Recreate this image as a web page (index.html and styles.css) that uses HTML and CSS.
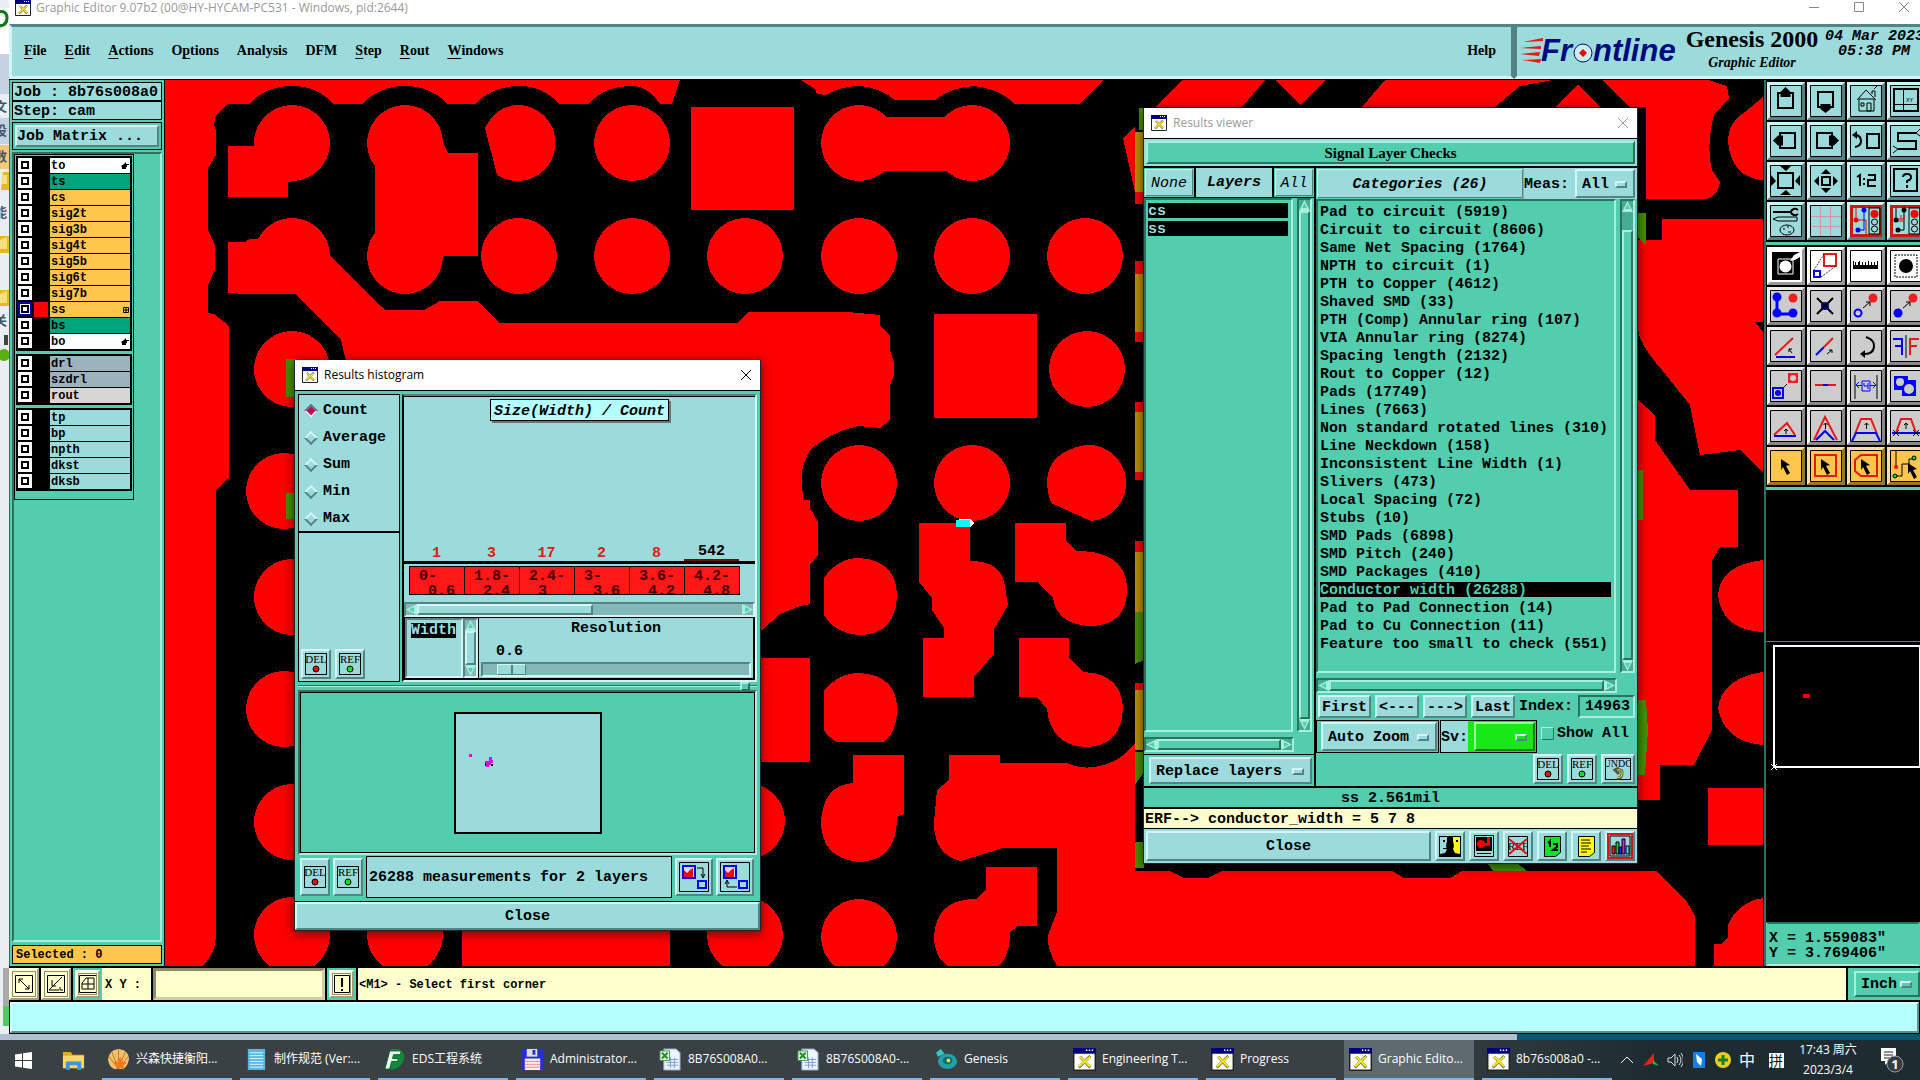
FILE: index.html
```html
<!DOCTYPE html>
<html lang="zh-CN">
<head>
<meta charset="utf-8">
<title>Graphic Editor</title>
<link rel="stylesheet" href="styles.css">
</head>
<body>
<svg class="defs" aria-hidden="true">
  <symbol id="x-app" viewBox="0 0 16 16"><path fill="#fff" stroke="#222" d="M.5.5h15v15H.5z"/><path fill="#000080" d="M0 0h16v4H0z"/><path fill="#fff" d="M9 1h1v1H9zM11 1h1v1h-1zM13 1h1v1h-1z"/><path d="M4 13.500l8-8M5 6l7 7.500" stroke="#555" stroke-width="2"/><path d="M4 13l8-7M5 6l7 7" stroke="#f4e420" stroke-width="1.500"/></symbol>
  <symbol id="x-close" viewBox="0 0 12 12"><path d="M1 1l10 10M11 1L1 11" stroke="currentColor" fill="none"/></symbol>
  <symbol id="i-hand" viewBox="0 0 8 8"><path d="M0 4l3-2 2-2v2h3v1H6v2H5v2H1V5z"/></symbol>
  <symbol id="i-del" viewBox="0 0 24 24"><path d="M1.500 1.500h21v21h-21z" fill="none" stroke="#000"/><text x="12" y="11" text-anchor="middle">DEL</text><circle cx="12" cy="17" r="3" fill="#e01010" stroke="#000"/></symbol>
  <symbol id="i-ref" viewBox="0 0 24 24"><path d="M1.500 1.500h21v21h-21z" fill="none" stroke="#000"/><text x="12" y="11" text-anchor="middle">REF</text><circle cx="12" cy="17" r="3" fill="#10e020" stroke="#000"/></symbol>
  <symbol id="i-xls" viewBox="0 0 24 24"><path d="M5 1h13l4 4v18H5z" fill="#eef4fc" stroke="#8aa4cc"/><path d="M8 12h12M8 15h12M8 18h12M12 10v11M16 10v11" stroke="#7c9cd0"/><path d="M1 3h10v10H1z" fill="#e8f8e8" stroke="#3a9a3a"/><path d="M3 5l6 6M9 5l-6 6" stroke="#228b22" stroke-width="2"/></symbol>
</svg>

<main class="desktop">
  <svg class="behind" viewBox="0 0 9 1040" preserveAspectRatio="xMinYMin slice" aria-hidden="true">
    <path fill="#e9eef3" d="M0 0h9v1040H0z"/><path fill="#fff" d="M0 8h9v46H0z"/><path d="M-2 12q9-2 9 6t-9 8" fill="none" stroke="#0a7a10" stroke-width="3"/><path fill="#c4d2e2" d="M0 54h9v40H0zM0 118h9v26H0z"/><path fill="#f4c878" d="M0 145h9v24H0z"/>
    <path fill="#e8b820" d="M3 172h6v18H1zM0 236h9v17H0zM0 290h9v16H0z"/><path fill="#f8e080" d="M3 175h4v9H2zM0 240l7-3v12H0zM0 294l7-3v12H0z"/><circle cx="4" cy="355" r="6" fill="#58b010"/><path fill="#444" d="M4 335h4v10H4z"/>
    <g fill="#456" font-size="13" font-family="Noto Sans CJK SC"><text x="-6" y="111">文</text><text x="-6" y="135">设</text><text x="-6" y="161">数</text><text x="-6" y="217">能</text><text x="-6" y="325">关</text></g>
    <path fill="#aaa" d="M3 968h6v38H3z"/><path fill="#45d060" d="M3 1006h6v20H3z"/>
  </svg>

  <section class="app">
    <header class="titlebar"><svg class="app-icon"><use href="#x-app"/></svg><h1>Graphic Editor 9.07b2 (00@HY-HYCAM-PC531 - Windows, pid:2644)</h1>
      <div class="win-buttons"><button aria-label="Minimize"><svg viewBox="0 0 12 12"><path d="M1 6.500h10" stroke="#888"/></svg></button><button aria-label="Maximize"><svg viewBox="0 0 12 12"><path d="M1.500 1.500h9v9h-9z" stroke="#888" fill="none"/></svg></button><button aria-label="Close window"><svg><use href="#x-close"/></svg></button></div>
    </header>
    <div class="menu-row">
      <nav class="menubar"><button><u>F</u>ile</button><button><u>E</u>dit</button><button><u>A</u>ctions</button><button>O<u>p</u>tions</button><button>Analysis</button><button>DFM</button><button><u>S</u>tep</button><button><u>R</u>out</button><button><u>W</u>indows</button><button class="help">Help</button></nav>
      <div class="brand">
        <svg class="logo" viewBox="0 0 162 28" aria-label="Frontline"><path fill="#e81818" d="M3 5l20-4v3zM0 11l21-2v3zM0 17l20-2-1 4zM2 23l19-1-1 4z"/><text x="21" y="24">Fr</text><text x="73" y="24">ntline</text><circle cx="63" cy="16" r="9" fill="#cdeef0" stroke="#000a80" stroke-width="1"/><path fill="#e00" d="M63 12l4 4-4 4-4-4z"/></svg>
        <div class="product"><strong>Genesis 2000</strong><em>Graphic Editor</em></div>
        <div class="date"><span>04 Mar 2023</span><span>05:38 PM</span></div>
      </div>
    </div>

    <div class="work">
      <aside class="left">
        <div class="field">Job : 8b76s008a0</div><div class="field">Step: cam</div>
        <div class="matrix"><button class="bevel">Job Matrix ...</button></div>
        <div class="layers"><div class="layer-frame">
          <div class="group">
            <label class="white"><input type="checkbox"><i></i><span>to<svg><use href="#i-hand"/></svg></span></label>
            <label class="teal"><input type="checkbox"><i></i><span>ts</span></label>
            <label class="gold"><input type="checkbox"><i></i><span>cs</span></label>
            <label class="gold"><input type="checkbox"><i></i><span>sig2t</span></label>
            <label class="gold"><input type="checkbox"><i></i><span>sig3b</span></label>
            <label class="gold"><input type="checkbox"><i></i><span>sig4t</span></label>
            <label class="gold"><input type="checkbox"><i></i><span>sig5b</span></label>
            <label class="gold"><input type="checkbox"><i></i><span>sig6t</span></label>
            <label class="gold"><input type="checkbox"><i></i><span>sig7b</span></label>
            <label class="gold"><input type="checkbox" checked><i></i><span>ss<svg viewBox="0 0 8 8"><path class="k1" d="M2.500 1.500h5v5h-5zM5 1v6M2 4h6"/></svg></span></label>
            <label class="teal"><input type="checkbox"><i></i><span>bs</span></label>
            <label class="white"><input type="checkbox"><i></i><span>bo<svg><use href="#i-hand"/></svg></span></label>
          </div>
          <div class="group">
            <label class="slate"><input type="checkbox"><i></i><span>drl</span></label>
            <label class="slate"><input type="checkbox"><i></i><span>szdrl</span></label>
            <label class="gray"><input type="checkbox"><i></i><span>rout</span></label>
          </div>
          <div class="group">
            <label class="aqua"><input type="checkbox"><i></i><span>tp</span></label>
            <label class="aqua"><input type="checkbox"><i></i><span>bp</span></label>
            <label class="aqua"><input type="checkbox"><i></i><span>npth</span></label>
            <label class="aqua"><input type="checkbox"><i></i><span>dkst</span></label>
            <label class="aqua"><input type="checkbox"><i></i><span>dksb</span></label>
          </div>
        </div></div>
        <div class="selected">Selected : 0</div>
      </aside>

      <svg class="board" viewBox="165 80 1598 886" preserveAspectRatio="xMinYMin slice" aria-label="Circuit board artwork">
        <path fill="#000" d="M165 80h1598v886H165z"/>
        <g fill="#f00">
          <path d="M165 80H680L672 104H660Q648 86 632 86Q604 86 589 104H559Q544 86 519 86Q493 86 475 104H448Q430 86 405 86Q380 86 362 104H333Q318 86 292 86Q266 86 249 104H227L216 115L214 125L216 130V155L208 168V230L215 245V270L208 285V313L214 314L229 326V478L216 490V935Q216 952 203 966H165z"/>
          <path d="M801 80L815 89L817 94L826 95Q840 86 861 86Q880 88 895 100H935Q950 88 973 86Q998 88 1015 104H1080L1103 80z"/>
          <path d="M228 146H292V182H288V197H228zM375 143H443L448 153H478V256H375zM691 107h103v103H691zM859 117h113v54H859z"/>
          <path d="M228 242H245L250 239H292L330 256L378 304L386 310H424L440 301H477L499 323H738L748 312L847 312L880 315V325L890 336V350L894 362V375L890 385V420L880 428L859 426Q830 432 810 450Q800 468 802 482L803 500H810V508L818 522V555L810 565V604L800 606L780 614L762 630H500V370H348L341 340L295 294H245L228 293z"/>
          <path d="M519 105a38 38 0 1 1-22 70L485 128Q497 105 519 105z"/>
          <circle cx="292" cy="143" r="38"/><circle cx="405" cy="143" r="38"/><circle cx="632" cy="143" r="38"/><circle cx="859" cy="143" r="38"/><circle cx="972" cy="143" r="38"/>
          <circle cx="292" cy="256" r="38"/><circle cx="405" cy="256" r="38"/><circle cx="519" cy="256" r="38"/><circle cx="632" cy="256" r="38"/><circle cx="745" cy="256" r="38"/><circle cx="859" cy="256" r="38"/><circle cx="972" cy="256" r="38"/><circle cx="1085" cy="256" r="38"/>
          <circle cx="292" cy="369" r="38"/><circle cx="1087" cy="369" r="38"/><circle cx="284" cy="491" r="38"/><circle cx="859" cy="483" r="38"/><circle cx="972" cy="483" r="38"/>
          <path d="M1085 445a38 38 0 0 1 6 76L1051 503Q1035 455 1085 445z"/>
          <path d="M934 314h103v104H934zM919 523h51v38q29 0 34 20l4 24-14 24v25l-20 23v20H923v-59h21v-10l-12-18v-12l-12-15h-1z"/>
          <path d="M1015 523h51v18l11 10q50 0 50 39 0 36-38 36-32-2-36-28l-16-16h-22z"/>
          <path d="M1019 638h50v20l15 14q38 2 39 37-2 38-38 38-34-2-38-38l-10-12h-18z"/>
          <path d="M824 578q14-20 35-20 38 2 38 39-2 38-38 38-24-2-35-20zM824 691q14-18 35-18 38 2 38 36 0 24-14 33h-46q-8-4-13-12z"/>
          <path d="M700 658h110v104H700zM853 755h51v59l-7 3q0 44-38 45-38-4-38-40 2-37 32-39z"/>
          <circle cx="747" cy="821" r="38"/><circle cx="745" cy="935" r="38"/><circle cx="859" cy="937" r="38"/>
          <path d="M949 755h51v8h67q18 8 36 2 18-4 32-22v128h35l14 7h24l14-7h170l12 7h46l12-7h195l30 31 8 14v50H1057q-10-16-9-31l9-23v-64h-54l-42 13q-27-6-27-38l3-33 12-10z"/>
          <path d="M986 867h51v59h-19l-8 6q0 44-38 42-38-4-38-38 2-37 42-37l10-10z"/>
          <circle cx="178" cy="935" r="38"/><circle cx="292" cy="935" r="38"/><circle cx="405" cy="935" r="38"/><path d="M462 900h208v66H462z"/>
          <circle cx="292" cy="597" r="38"/><circle cx="284" cy="709" r="38"/><circle cx="292" cy="822" r="38"/>
          <path d="M1156 107L1182 80H1265L1242 107zM1275 80H1325L1301 105zM1362 107L1385 80H1553L1520 86L1495 107zM1555 107L1578 85L1600 107z"/>
          <path d="M1602 80H1708L1727 86L1729 98L1714 115Q1706 145 1712 170L1720 182Q1718 196 1706 199H1646V107H1629z"/>
          <path d="M1763 97L1745 112Q1728 122 1728 142Q1732 178 1763 180z"/>
          <path d="M1662 219H1763V322H1755L1763 332V473L1740 450L1700 455L1690 405L1662 370Q1640 345 1638 330V240H1662z"/>
          <path d="M1638 400L1655 415V440L1690 490H1738V547H1720L1712 560V730L1694 765H1638zM1646 763H1660V800H1638V762z"/>
          <path d="M1763 560Q1720 565 1718 595Q1722 630 1763 632zM1763 672Q1722 678 1718 708Q1724 742 1763 745zM1708 788H1763V845H1708z"/>
          <path d="M1714 966V944H1722L1728 937V925Q1738 902 1763 898V966z"/>
          <path d="M1123 138L1135 127V204H1144V192H1135zM1135 261h9v81h-9zM1135 402h9v78h-9zM1135 541h9v20h-9zM1135 683h9v10h-9z"/>
        </g>
        <path fill="#489200" d="M286 359h10v38h-10zM286 493h10v26h-10zM1139 108h5v22h-5zM1135 612h9v48l-9 4zM1135 752h9v20l-9 13zM1135 842h9v26h-9zM1487 863h30l10 8h-34zM1637 213h9v32l-9-8zM1637 700h9l2 30-3 45h-8zM1637 470h6v50h-6z"/>
        <path fill="#bd9200" d="M1135 132h9v60h-9zM1135 274h9v58h-9zM1135 412h9v60h-9zM1135 552h9v60h-9zM1135 690h9v60h-9z"/>
        <path fill="#fff" d="M955 523l4-4h12l3 4-3 4h-12z"/><path fill="#0ff" d="M956 520h14v7h-14z"/>
      </svg>

      <aside class="right">
        <div class="tools aqua-tools">
          <button aria-label="Pan up"><svg viewBox="0 0 32 32"><path class="fr"/><path class="k2" d="M8 8h15v15H8z"/><path d="M15.500 2l5 5v5h-10V7z"/></svg></button>
          <button aria-label="Pan down"><svg viewBox="0 0 32 32"><path class="fr"/><path class="k2" d="M8 7h15v15H8z"/><path d="M15.500 28l5-4v-5h-10v5z"/></svg></button>
          <button aria-label="Home"><svg viewBox="0 0 32 32"><path class="fr"/><path class="k1" d="M9 14h15v12H9zM7 15L16 5l10 10M22 9V6h3v6M17 18h4v8h-4zM11 18h3v3h-3zM24 4l3-3"/></svg></button>
          <button aria-label="Coordinates"><svg viewBox="0 0 32 32"><path class="fr"/><path class="k2" d="M4 4h24v22H4z"/><path class="k1" d="M13.500 3v24M3 19.500h25"/><text x="16" y="17" font-size="6">XY</text></svg></button>
          <button aria-label="Pan left"><svg viewBox="0 0 32 32"><path class="fr"/><path class="k2" d="M10 8h15v15H10z"/><path d="M3 15.500l5-5h5v10H8z"/></svg></button>
          <button aria-label="Pan right"><svg viewBox="0 0 32 32"><path class="fr"/><path class="k2" d="M7 8h15v15H7z"/><path d="M29 15.500l-5-5h-5v10h5z"/></svg></button>
          <button aria-label="Previous view"><svg viewBox="0 0 32 32"><path class="fr"/><path class="k2" d="M17 9h12v14H17zM5 22q6-1 6-6t-5-6"/><path d="M2 10l5-4v8z"/></svg></button>
          <button aria-label="Serpentine"><svg viewBox="0 0 32 32"><path class="fr"/><path class="k2" d="M26 8H8v8h18v8H8"/><path class="k1" d="M26 8l4-4M8 24l-5 4M26 8l4 3M8 24l-5-3"/></svg></button>
          <button aria-label="Zoom in"><svg viewBox="0 0 32 32"><path class="fr"/><path class="k2" d="M8 8h15v15H8z"/><path d="M10 1h11l-5 5zM10 30h11l-5-5zM1 10v11l5-5zM30 10v11l-5-5z"/></svg></button>
          <button aria-label="Zoom out"><svg viewBox="0 0 32 32"><path class="fr"/><path class="k2" d="M12 12h8v8h-8z"/><path d="M11 9h10l-5-5zM11 23h10l-5 5zM9 11v10l-5-5zM23 11v10l5-5z"/></svg></button>
          <button aria-label="Scale one to two"><svg viewBox="0 0 32 32"><path class="fr"/><path class="k2" d="M7 12l3-2v11M14 13v2M14 18v2M18 10h7v5h-7v6h8"/></svg></button>
          <button aria-label="Query"><svg viewBox="0 0 32 32"><path class="fr"/><path class="k2" d="M4 4h23v22H4zM13 12q0-3 4-3t4 3-4 4v2M17 20v3"/></svg></button>
          <button aria-label="Setup"><svg viewBox="0 0 32 32"><path class="fr"/><path class="k2" d="M3 7h17"/><path class="k2" d="M28 5a4 3 0 1 0 0 4"/><path class="k1" d="M3 14l5-2h19v4H8z"/><ellipse class="k1" cx="17" cy="25" rx="7" ry="5"/><path class="k1" d="M13 24h2M17 22h2M18 27h3"/></svg></button>
          <button aria-label="Grid"><svg viewBox="0 0 32 32"><path class="fr"/><path d="M10.500 1v30M20.500 1v30M1 11.500h30M1 21.500h30" stroke="#c99" fill="none"/></svg></button>
          <button aria-label="Net check" class="alert"><svg viewBox="0 0 32 32"><path d="M6 3v12h10v15" stroke="#e00" fill="none"/><path d="M14 5v20H8" stroke="#00f" fill="none"/><circle cx="6" cy="15" r="2.500" fill="#e00"/><circle cx="14" cy="5" r="2.500" fill="#00f"/><circle cx="8" cy="25" r="2.500" fill="#00f"/><path class="k1" d="M19 3h11v26H19z"/><circle cx="24.500" cy="9" r="4" fill="#f00"/><circle class="k1" cx="24.500" cy="17" r="3"/><circle class="k1" cx="24.500" cy="24" r="3"/></svg></button>
          <button aria-label="Net compare" class="alert"><svg viewBox="0 0 32 32"><path d="M6 3v12M14 5v20H8" stroke="#000" fill="none"/><path d="M8 14h6v-4M11 10v4M8 16h6" stroke="#e00" fill="none"/><circle cx="6" cy="15" r="2.500"/><circle cx="14" cy="5" r="2.500"/><circle cx="8" cy="25" r="2.500"/><path class="k1" d="M19 3h11v26H19z"/><circle cx="24.500" cy="9" r="4" fill="#f00"/><circle class="k1" cx="24.500" cy="17" r="3"/><circle class="k1" cx="24.500" cy="24" r="3"/></svg></button>
        </div>
        <div class="tools gray-tools">
          <button class="lit" aria-label="Negative"><svg viewBox="0 0 32 32"><path d="M2 2h28v28H2z"/><path d="M8 9h15v15H8z" fill="#000" stroke="#fff"/><circle cx="15.500" cy="16.500" r="6" fill="#fff"/><path d="M20 11l4-6 6-3v5l-5 3z" fill="#fff"/></svg></button>
          <button class="lit" aria-label="Control"><svg viewBox="0 0 32 32"><path class="fr"/><path class="r2" d="M14 4h12v12H14z"/><path class="b2" d="M4 21h6v6H4z"/><path class="k1" stroke-dasharray="1 1" d="M4 20L14 4M11 27l15-11"/></svg></button>
          <button class="lit" aria-label="Ruler"><svg viewBox="0 0 32 32"><path class="fr"/><path d="M3 11v8h25v-8h-1v4h-2v-3h-1v3h-2v-3h-1v3h-2v-4h-1v4h-2v-3h-1v3h-2v-3h-1v3h-2v-4h-1v4H9v-3H8v3H6v-3H5v3H4v-4z"/></svg></button>
          <button class="lit" aria-label="Highlight"><svg viewBox="0 0 32 32"><path class="fr"/><path class="k1" stroke-dasharray="2 1" d="M5 5h22v22H5z"/><circle cx="16" cy="16" r="7"/></svg></button>
          <button aria-label="Connected"><svg viewBox="0 0 32 32"><path class="fr"/><path d="M7 7v17h17" stroke="#00f" stroke-width="3" fill="none"/><g fill="#00f"><circle cx="7" cy="7" r="4.500"/><circle cx="7" cy="23" r="4.500"/><circle cx="23" cy="23" r="4.500"/></g><circle cx="23" cy="8" r="4.500" fill="#f02020"/></svg></button>
          <button aria-label="Delete"><svg viewBox="0 0 32 32"><path class="fr"/><circle cx="15" cy="16" r="4" fill="#00a"/><path class="k2" d="M7 8l16 16M23 8L7 24"/></svg></button>
          <button aria-label="Move"><svg viewBox="0 0 32 32"><path class="fr"/><circle class="b2" cx="8" cy="23" r="3.500"/><circle cx="23" cy="8" r="4.500" fill="#f02020"/><path class="k1" d="M13 18l7-6m-4 0h4v4"/></svg></button>
          <button aria-label="Copy"><svg viewBox="0 0 32 32"><path class="fr"/><circle cx="8" cy="23" r="4.500" fill="#00f"/><circle cx="23" cy="8" r="4.500" fill="#f02020"/><path class="k1" d="M13 18l7-6m-4 0h4v4"/></svg></button>
          <button aria-label="Angle"><svg viewBox="0 0 32 32"><path class="fr"/><path class="r2" d="M5 25L23 8"/><path class="b2" d="M6 27h19"/><path class="k1" d="M22 23l-3-4m0 3v-3h3"/></svg></button>
          <button aria-label="Line"><svg viewBox="0 0 32 32"><path class="fr"/><path class="b2" d="M6 25l8-8"/><path class="r2" d="M14 17l9-9"/><path class="k1" d="M17 24l5-4m-3 0h3v3"/></svg></button>
          <button aria-label="Rotate"><svg viewBox="0 0 32 32"><path class="fr"/><path class="k2" d="M16 7q9 3 8 10t-9 7h-4"/><path d="M10 24l5-4v8z"/></svg></button>
          <button aria-label="Mirror"><svg viewBox="0 0 32 32"><path class="fr"/><path class="b2" d="M3 9h9v16M12 16H5"/><path class="r2" d="M29 9h-9v16M20 16h7"/><path class="k1" d="M16 5v23"/></svg></button>
          <button aria-label="Change symbol"><svg viewBox="0 0 32 32"><path class="fr"/><path fill="#f02020" d="M18 3h10v10H18z"/><circle cx="23" cy="8" r="3" fill="#ccc"/><path class="b2" d="M3 18h10v10H3z"/><circle cx="8" cy="23" r="3" fill="#00f"/><path class="k1" d="M14 17l3-3"/></svg></button>
          <button aria-label="Trim"><svg viewBox="0 0 32 32"><path class="fr"/><path class="r2" d="M5 15h21"/><path class="b2" d="M13 15h5"/></svg></button>
          <button aria-label="Spacing"><svg viewBox="0 0 32 32"><path class="fr"/><path class="k1" d="M5 5v24M27 5v24"/><path d="M6 15.500h6M20 15.500h6M9 12l-3 3 3 3M23 12l3 3-3 3M12 11h8v10h-8zM14 13v3h4M18 13v6" fill="none" stroke="#00f"/></svg></button>
          <button aria-label="Merge"><svg viewBox="0 0 32 32"><path class="fr"/><path fill="#00f" d="M4 6h14v4h8v16H12v-6H4z"/><circle cx="10" cy="12" r="4" fill="#ccc"/><circle cx="19" cy="19" r="5" fill="#ccc"/></svg></button>
          <button aria-label="Triangle"><svg viewBox="0 0 32 32"><path class="fr"/><path class="r2" d="M4 25l13-12 8 12"/><path class="b2" d="M4 26h22"/><path class="k1" d="M16 24v-5m-2 2l2-2 2 2"/></svg></button>
          <button aria-label="Peak"><svg viewBox="0 0 32 32"><path class="fr"/><path class="r2" d="M4 30L15 7l12 23"/><path class="b2" d="M6 30l9-9 9 9"/><path class="k1" d="M15.500 19v-6m-2 2l2-2 2 2"/></svg></button>
          <button aria-label="Trapezoid"><svg viewBox="0 0 32 32"><path class="fr"/><path class="r2" d="M5 24l6-15h10l6 15"/><path class="b2" d="M2 31l4-8h20l4 8"/><path class="k1" d="M16.500 19v-6m-2 2l2-2 2 2"/></svg></button>
          <button aria-label="Trapezoid cut"><svg viewBox="0 0 32 32"><path class="fr"/><path class="r2" d="M6 23l5-14h10l5 14"/><path class="b2" d="M2 23h28"/><path class="k1" d="M3 20l6 6M9 20l-6 6M23 20l6 6M29 20l-6 6M16 19v-6m-2 2l2-2 2 2"/></svg></button>
          <button class="orange" aria-label="Select"><svg viewBox="0 0 32 32"><path class="fr"/><path d="M11 9l9 6-4 1 4 7-3 2-4-8-2 3z"/></svg></button>
          <button class="orange" aria-label="Select in frame"><svg viewBox="0 0 32 32"><path class="fr"/><path class="r2" d="M5 5h21v21H5z"/><path d="M11 9l9 6-4 1 4 7-3 2-4-8-2 3z"/></svg></button>
          <button class="orange" aria-label="Select in polygon"><svg viewBox="0 0 32 32"><path class="fr"/><path class="r2" d="M11 5h16v21H11l-6-5V10z"/><path d="M11 9l9 6-4 1 4 7-3 2-4-8-2 3z"/></svg></button>
          <button class="orange" aria-label="Select net"><svg viewBox="0 0 32 32"><path class="fr"/><path class="k1" d="M6 1v16M5 26h7V14h7V9h6"/><circle cx="6" cy="17" r="2" fill="#e00"/><circle cx="5" cy="26" r="2" fill="#1d1" stroke="#000"/><circle cx="24" cy="8" r="2" fill="#1d1" stroke="#000"/><path d="M18 13l9 6-4 1 4 7-3 2-4-8-2 3z"/></svg></button>
        </div>
        <div class="overview"><svg viewBox="0 0 155 434" aria-label="Board overview"><path d="M0 151.500h155" stroke="#678"/><path d="M8 156h146v121H8z" fill="none" stroke="#fff" stroke-width="2"/><path fill="#f00" d="M37 204h7v4h-7z"/><path d="M5 274l6 6M11 274l-6 6" stroke="#fff"/></svg></div>
        <div class="position">X = 1.559083"<br>Y = 3.769406"</div>
      </aside>
    </div>

    <div class="entry-row">
      <button class="cream" aria-label="Resize"><svg viewBox="0 0 20 20"><path class="k1" d="M1.500 1.500h17v17h-17zM5 5l10 10M5 9V5h4M15 11v4h-4"/></svg></button>
      <button class="cream" aria-label="Angle snap"><svg viewBox="0 0 20 20"><path class="k1" d="M1.500 1.500h17v17h-17zM3 16L16 3M3 16h10M6 6v6h4M14 13v3h3"/></svg></button>
      <span class="well"><button class="cream" aria-label="Grid snap"><svg viewBox="0 0 20 20"><path class="k1" d="M1.500 1.500h17v17h-17zM4 15V9l4-5h8v11zM4 10h12M10 4v11"/></svg></button></span>
      <label for="xy">X Y :</label><input id="xy" class="cream-input" type="text">
      <span class="well"><button class="cream" aria-label="Apply"><svg viewBox="0 0 20 20"><path class="k1" d="M2.500 1.500h15v17h-15z"/><path class="k2" d="M10 4v9M10 15v2"/></svg></button></span>
      <output>&lt;M1&gt; - Select first corner</output>
      <span class="unit"><span class="option green"><select aria-label="Units"><option>Inch</option></select></span></span>
    </div>
    <div class="status"></div>
  </section>

  <section class="dialog histogram">
    <header class="dialog-title"><svg class="app-icon"><use href="#x-app"/></svg><h2>Results histogram</h2><button aria-label="Close histogram window"><svg><use href="#x-close"/></svg></button></header>
    <div class="hist-body">
      <div class="hist-top">
        <div class="hist-side">
          <fieldset aria-label="Statistic"><label><input type="radio" name="stat" checked>Count</label><label><input type="radio" name="stat">Average</label><label><input type="radio" name="stat">Sum</label><label><input type="radio" name="stat">Min</label><label><input type="radio" name="stat">Max</label></fieldset>
          <div class="side-buttons"><button class="bevel sq" aria-label="Delete"><svg><use href="#i-del"/></svg></button><button class="bevel sq" aria-label="Refresh"><svg><use href="#i-ref"/></svg></button></div>
        </div>
        <div class="hist-main">
          <div class="chart"><div class="chart-title">Size(Width) / Count</div>
            <div class="counts"><span>1</span><span>3</span><span>17</span><span>2</span><span>8</span><span class="high">542</span></div>
          </div>
          <div class="bins"><span>0-<i>0.6</i></span><span>1.8-<i>2.4</i></span><span>2.4-<i>3</i></span><span>3-<i>3.6</i></span><span>3.6-<i>4.2</i></span><span>4.2-<i>4.8</i></span></div>
          <div class="hscroll aq"><b class="l"></b><span><i style="width:54%"></i></span><b class="r"></b></div>
          <div class="hist-controls"><div class="width-list"><mark>Width</mark></div><div class="vscroll aq"><b class="u"></b><span><i></i></span><b class="d"></b></div>
            <div class="resolution"><label for="res">Resolution</label><output>0.6</output><input id="res" type="range" min="0" max="10" step="0.1" value="0.600"></div></div>
        </div>
      </div>
      <div class="sash"><i></i></div>
      <div class="map"><svg viewBox="0 0 148 122" aria-label="Result locations"><path fill="#9cdbdb" stroke="#000" stroke-width="2" d="M1 1h146v120H1z"/><path fill="#c818e0" d="M15 42h3v3h-3zM35 45h3v3h1v3h-2v2h-2v2h-3v-3h-1v-3h4z"/><path d="M31 51h1v3h-1zM37 52h2v2h-2z"/></svg></div>
      <div class="hist-foot"><button class="bevel tall" aria-label="Delete"><svg><use href="#i-del"/></svg></button><button class="bevel tall" aria-label="Refresh"><svg><use href="#i-ref"/></svg></button><div class="summary">26288 measurements for 2 layers</div>
        <button class="bevel chart-btn" aria-label="Chart to list"><svg viewBox="0 0 30 30"><path class="k1" d="M.500.500h29v29H.500z"/><path fill="#d8d8ff" stroke="#00e" stroke-width="2" d="M4 4h12v12H4z"/><path fill="#e01010" d="M5 15V8l3 3 3-3 3-2v9z"/><path class="b2" d="M19 19h8v7h-8z"/><path class="k1" d="M18 6h6v9m-2-3l2 4 2-4"/></svg></button><button class="bevel chart-btn" aria-label="List to chart"><svg viewBox="0 0 30 30"><path class="k1" d="M.500.500h29v29H.500z"/><path fill="#d8d8ff" stroke="#00e" stroke-width="2" d="M4 4h12v12H4z"/><path fill="#e01010" d="M5 15V8l3 3 3-3 3-2v9z"/><path class="b2" d="M19 19h8v7h-8z"/><path class="k1" d="M17 25H7v-6m-2 3l2-4 2 4"/></svg></button></div>
    </div>
    <button class="bevel close-bar">Close</button>
  </section>

  <section class="dialog viewer">
    <header class="dialog-title inactive"><svg class="app-icon"><use href="#x-app"/></svg><h2>Results viewer</h2><button aria-label="Close viewer window"><svg><use href="#x-close"/></svg></button></header>
    <div class="checks"><button class="bevel-g">Signal Layer Checks</button></div>
    <div class="columns">
      <div class="layers-col">
        <div class="layers-head"><button class="bevel it">None</button><h3>Layers</h3><button class="bevel it">All</button></div>
        <div class="list-area"><ul class="list dark"><li class="sel">cs</li><li class="sel">ss</li></ul><div class="vscroll"><b class="u"></b><span><i></i></span><b class="d"></b></div></div>
        <div class="hscroll short"><b class="l"></b><span><i style="width:100%"></i></span><b class="r"></b></div>
        <div class="replace"><span class="option"><select aria-label="Layer action"><option>Replace layers</option></select></span></div>
      </div>
      <div class="cat-col">
        <div class="cat-head"><button class="bevel it-b">Categories (26)</button><label for="meas">Meas:</label><span class="option"><select id="meas"><option>All</option></select></span></div>
        <div class="list-area"><ul class="list"><li>Pad to circuit (5919)</li><li>Circuit to circuit (8606)</li><li>Same Net Spacing (1764)</li><li>NPTH to circuit (1)</li><li>PTH to Copper (4612)</li><li>Shaved SMD (33)</li><li>PTH (Comp) Annular ring (107)</li><li>VIA Annular ring (8274)</li><li>Spacing length (2132)</li><li>Rout to Copper (12)</li><li>Pads (17749)</li><li>Lines (7663)</li><li>Non standard rotated lines (310)</li><li>Line Neckdown (158)</li><li>Inconsistent Line Width (1)</li><li>Slivers (473)</li><li>Local Spacing (72)</li><li>Stubs (10)</li><li>SMD Pads (6898)</li><li>SMD Pitch (240)</li><li>SMD Packages (410)</li><li class="sel">Conductor width (26288)</li><li>Pad to Pad Connection (14)</li><li>Pad to Cu Connection (11)</li><li>Feature too small to check (551)</li></ul><div class="vscroll lower"><b class="u"></b><span><i></i></span><b class="d"></b></div></div>
        <div class="hscroll short"><b class="l"></b><span><i style="width:100%"></i></span><b class="r"></b></div>
        <div class="nav-row"><button class="bevel">First</button><button class="bevel">&lt;---</button><button class="bevel">---&gt;</button><button class="bevel">Last</button><label for="idx">Index:</label><input id="idx" type="text" value="14963"></div>
        <div class="zoom-row"><span class="boxed"><span class="option"><select aria-label="Zoom mode"><option>Auto Zoom</option></select></span></span><span class="boxed sv"><label for="sv">Sv:</label><span class="option lime"><select id="sv"><option></option></select></span></span><label class="show"><input type="checkbox">Show All</label></div>
        <div class="action-row"><button class="bevel sq" aria-label="Delete"><svg><use href="#i-del"/></svg></button><button class="bevel sq" aria-label="Refresh"><svg><use href="#i-ref"/></svg></button><button class="bevel undo" aria-label="Undo"><svg viewBox="0 0 26 24"><path d="M.500 1.500h25v21H.500z" fill="none" stroke="#000"/><text x="13" y="10" text-anchor="middle">UNDO</text><path d="M12 13q6-1 5 4t-5 4M14 11l-4 2 4 4" fill="none" stroke="#554" stroke-width="3"/><path d="M12 13q6-1 5 4t-5 3" fill="none" stroke="#ee2"/></svg></button></div>
      </div>
    </div>
    <div class="measure">ss 2.561mil</div>
    <div class="erf">ERF--&gt; conductor_width = 5 7 8</div>
    <div class="view-foot"><button class="bevel">Close</button>
      <button class="bevel sq" aria-label="Day or night"><svg viewBox="0 0 24 24"><path d="M1 2h22v21H1z"/><path fill="#9cdbdb" d="M2 3h7v4l-1 5 1 3-2 4-5 1z"/><path fill="#ff0" d="M15 3h7v17l-5-1-2-4 1-3-1-5z"/><path d="M5 6h2v2H5zM18 6h2v2h-2zM5 14h4v1H5z"/></svg></button>
      <button class="bevel sq" aria-label="Record"><svg viewBox="0 0 24 24"><path class="k1" d="M2.500 1.500h19v21h-19z"/><path d="M4 3h16v14H4z"/><circle cx="9" cy="10" r="4" fill="#e00"/><path fill="#e00" d="M15 3h3v9h-6v-3h3z"/><path class="k1" d="M5 19.500h14"/></svg></button>
      <button class="bevel sq" aria-label="No reference"><svg viewBox="0 0 24 24"><path class="k1" d="M2.500 2.500h19v20h-19z"/><text x="12" y="16" text-anchor="middle">REF</text><path d="M3 5l18 15M21 5L3 20" stroke="#e01010" stroke-width="2"/></svg></button>
      <button class="bevel sq" aria-label="Half"><svg viewBox="0 0 24 24"><path fill="#10e030" stroke="#000" d="M4.500 2.500h16v16l-5 4h-11z"/><path class="k2" d="M8 9l2-2v6M13 10h4v3l-4 3h5"/></svg></button>
      <button class="bevel sq" aria-label="Notes"><svg viewBox="0 0 24 24"><path fill="#ff0" stroke="#000" d="M4.500 2.500h16v16l-5 4h-11z"/><path class="k1" d="M7 6h9M7 9h10M7 12h8M7 15h10M7 18h6"/></svg></button>
      <button class="bevel sq red" aria-label="Histogram"><svg viewBox="0 0 24 24"><path class="k1" d="M2 2h20v20H2z"/><path fill="#e22" stroke="#000" d="M4 12h3v8H4z"/><path fill="#1c4" stroke="#000" d="M8 8h3v12H8z"/><path fill="#22e" stroke="#000" d="M11 13h3v7h-3z"/><path fill="#c2e" stroke="#000" d="M14 5h3v15h-3z"/><path fill="#2ef" stroke="#000" d="M18 12h3v8h-3z"/></svg></button>
    </div>
  </section>
</main>

<footer class="taskbar">
  <button class="start" aria-label="Start"><svg viewBox="0 0 17 17"><path fill="#fff" d="M0 2.500l7-1V8H0zM8 1.300L17 0v8H8zM0 9h7v6.500l-7-1zM8 9h9v8l-9-1.300z"/></svg></button>
  <button class="folder" aria-label="File Explorer"><svg viewBox="0 0 24 24"><path fill="#e8a820" d="M1 3h8l2 3h12v14H1z"/><path fill="#ffd765" d="M1 7h22v13H1z"/><path fill="#3a96dd" d="M4 13h16v9h-4v-5H8v5H4z"/></svg></button>
  <div class="tasks">
    <button><svg viewBox="0 0 24 24"><path fill="#f0c070" d="M12 1q11 1 11 11-2 9-7 10H8Q2 20 1 12 2 2 12 1z"/><path d="M12 22L5 4M12 22l7-18M12 22V2M12 22L2 9M12 22l10-13" stroke="#c07818"/><path fill="#f07818" d="M14 9l2 5 5 1-4 3 1 5-5-3-4 3 1-5-4-3 5-1z"/></svg>兴森快捷衡阳...</button>
    <button><svg viewBox="0 0 24 24"><path fill="#58b8e0" d="M3 1h18v22H3z"/><path d="M5 5h14M5 8h14M5 11h14M5 14h14M5 17h14M5 20h14" stroke="#e0f8ff"/></svg>制作规范 (Ver:...</button>
    <button><svg viewBox="0 0 24 24"><path fill="#128a3c" d="M8 1h9q8 6 4 13-4 8-13 9z"/><path fill="#e8f8ec" stroke="#0a6028" d="M7 3h12l-1 4h-7l-1 4h6l-1 3H9l-2 8H2z"/></svg>EDS工程系统</button>
    <button><svg viewBox="0 0 24 24"><path fill="#2430d0" d="M1 1h22v22H1z"/><path fill="#ddd" d="M6 1h11v8H6z"/><path fill="#2430d0" d="M12 2h3v5h-3z"/><path fill="#fff0f0" d="M4 11h16v12H4z"/><path d="M4 14h16M4 17h16M4 20h16" stroke="#f08080"/></svg>Administrator...</button>
    <button><svg><use href="#i-xls"/></svg>8B76S008A0...</button>
    <button><svg><use href="#i-xls"/></svg>8B76S008A0-...</button>
    <button><svg viewBox="0 0 24 24"><ellipse cx="13" cy="14" rx="10" ry="8" fill="#20a0a8"/><path d="M1 5l5-4 4 5-7 3z" fill="#30c8b8"/><ellipse cx="13" cy="13" rx="5" ry="4" fill="#086878"/><circle cx="14" cy="13" r="2" fill="#e8e820"/></svg>Genesis</button>
    <button><svg><use href="#x-app"/></svg>Engineering T...</button>
    <button><svg><use href="#x-app"/></svg>Progress</button>
    <button class="active"><svg><use href="#x-app"/></svg>Graphic Edito...</button>
    <button><svg><use href="#x-app"/></svg>8b76s008a0 -...</button>
  </div>
  <div class="tray">
    <svg viewBox="0 0 16 16"><path d="M2 11l6-6 6 6" fill="none" stroke="#fff"/></svg>
    <svg viewBox="0 0 16 16"><path fill="#e82020" d="M0 14L11 1v10z"/><path fill="#10c040" d="M10 8l6 6-6-2z"/></svg>
    <svg viewBox="0 0 16 16"><path d="M1 6h3l4-4v12l-4-4H1zM10 5q2 3 0 6M12 3q4 5 0 10M14 1q5 7 0 14" fill="none" stroke="#ddd"/></svg>
    <svg viewBox="0 0 16 16"><path fill="#1080e8" d="M2 0h12v16H2z"/><path fill="#fff" d="M5 2l6 5-1 7-4-4z"/></svg>
    <svg viewBox="0 0 16 16"><circle cx="8" cy="8" r="8" fill="#e8d020"/><path d="M8 3v10M3 8h10" stroke="#188028" stroke-width="3"/></svg>
    <span>中</span><span class="ime">拼</span>
  </div>
  <time>17:43 周六<br>2023/3/4</time>
  <button class="notice" aria-label="Notifications"><svg viewBox="0 0 24 26"><path fill="#fff" d="M1 1h15v13H9l-4 4v-4H1z"/><path d="M4 5h9M4 8h9M4 11h6" stroke="#223"/><circle cx="15" cy="17" r="8" fill="#333c40" stroke="#99a"/><text x="15" y="21.500" text-anchor="middle">1</text></svg></button>
</footer>
</body>
</html>
```
FILE: styles.css
```css
:root {
  --aqua: #9cdbdb;
  --aqua-hi: #d3f5f5;
  --aqua-lo: #528484;
  --green: #52ceae;
  --green-hi: #a5efdc;
  --green-lo: #29735f;
  --cream: #ffffce;
  --mono: "Liberation Mono", "Courier New", monospace;
  --serif: "Liberation Serif", "Times New Roman", serif;
  --ui: "Open Sans", "Noto Sans CJK SC", sans-serif;
}
*, ::after { box-sizing: border-box; }
body { margin: 0; height: 100vh; display: flex; flex-direction: column; overflow: hidden; font: bold 15px/18px var(--mono); color: #000; }
button, input, select { font: inherit; color: inherit; padding: 0; margin: 0; border-radius: 0; }
button { display: flex; align-items: center; justify-content: center; background: none; border: 0; }
h1, h2, h3, ul { margin: 0; padding: 0; font: inherit; list-style: none; }
.defs { position: absolute; width: 0; height: 0; }
svg { display: block; flex: none; }
.k1, .k2, .r2, .b2 { fill: none; stroke: #000; }
.k2, .r2, .b2 { stroke-width: 2; }
.r2 { stroke: #e81818; }
.b2 { stroke: #0000f0; }
.fr { d: path("M.5 .5h31v31H.5z"); fill: none; stroke: #000; }

.desktop { position: relative; flex: 1; min-height: 0; display: flex; background: linear-gradient(90deg, #b0c0d0 79%, #00586e 79%); padding-bottom: 6px; }
.behind { width: 9px; height: 100%; }
.app { flex: 1; min-width: 0; display: flex; flex-direction: column; background: #fff; }
.titlebar { height: 24px; display: flex; align-items: flex-start; padding: 0 6px; gap: 5px; font: 12px/16px var(--ui); color: #999; }
.app-icon { width: 16px; height: 16px; }
.win-buttons { margin: 1px 4px 0 auto; display: flex; gap: 33px; color: #888; }
.win-buttons svg { width: 12px; height: 12px; }

.menu-row { display: flex; height: 55px; background: #000; }
.menubar { flex: 1; display: flex; align-items: center; padding: 0 15px 2px 12px; gap: 18px; background: var(--aqua); border: 3px solid; border-color: var(--aqua-lo) var(--aqua-lo) var(--aqua-hi) var(--aqua-hi); font: bold 14px/18px var(--serif); }
.menubar u { text-underline-offset: 3px; }
.help { margin-left: auto; }
.brand { width: 406px; display: flex; background: var(--aqua); border: solid; border-width: 3px 0 3px 3px; border-color: var(--aqua-lo) var(--aqua-lo) var(--aqua-hi) var(--aqua-lo); }
.logo { width: 162px; height: 28px; margin: 10px 0 0 3px; font: italic bold 31px "Liberation Sans", Arial, sans-serif; fill: #000a80; }
.product { width: 140px; text-align: center; font: bold 24px/24px var(--serif); }
.product em { display: block; font-size: 14px; line-height: 24px; }
.date { flex: 1; overflow: hidden; font-style: italic; line-height: 15px; white-space: nowrap; padding: 2px 0 0 3px; text-align: left; }
.date span { display: block; }
.date span + span { padding-left: 13px; }

.work { flex: 1; min-height: 0; display: flex; border-top: 1px solid #000; background: #000; }
.left { width: 155px; margin-right: 1px; background: var(--green); display: flex; flex-direction: column; padding: 2px; border-left: 1px solid var(--green-lo); }
.field { height: 19px; border: 1px solid #000; background: var(--aqua); padding: 1px 1px 0; white-space: nowrap; }
.matrix { margin-top: 2px; border: 1px solid #000; padding: 2px; height: 28px; }
.matrix button { width: 100%; height: 100%; justify-content: flex-start; }
.bevel { background: var(--aqua); border: 2px solid; border-color: var(--aqua-hi) var(--aqua-lo) var(--aqua-lo) var(--aqua-hi); padding-top: 2px; }
.bevel-g { background: var(--green); border: 2px solid; border-color: var(--green-hi) var(--green-lo) var(--green-lo) var(--green-hi); }
.layers { flex: 1; margin-top: 2px; border: 2px solid; border-color: var(--green-lo) var(--green-hi) var(--green-hi) var(--green-lo); }
.layer-frame { width: 120px; border: 1px solid #000; padding: 1px 1px 8px; display: flex; flex-direction: column; gap: 3px; font-size: 12px; line-height: 16px; }
.group { background: #000; padding: 2px 2px 1px; }
.group label { display: flex; height: 16px; padding-bottom: 1px; }
.group input { appearance: none; width: 14px; height: 14px; background: #fff; border: 2px solid #fff; outline: 2px solid #000; outline-offset: -5px; }
.group input:checked { border-color: #0000a8; }
.group i { width: 14px; margin: 0 2px; }
.group input:checked + i { background: #f00; }
.group span { flex: 1; display: flex; justify-content: space-between; padding: 0 1px; }
.group svg { width: 8px; height: 8px; margin-top: 4px; }
.white span { background: #fff; } .teal span { background: #00a57b; } .gold span { background: #ffc64e; }
.slate span { background: #9cb2bd; } .gray span { background: #d6d6d6; } .aqua span { background: var(--aqua); }
.selected { height: 19px; margin-top: 3px; border: 1px solid #000; background: #ffc64e; padding: 0 3px; font-size: 12px; line-height: 18px; }
.board { flex: 1; min-width: 0; width: 0; height: 100%; shape-rendering: crispEdges; }

.right { width: 156px; margin-left: 1px; display: flex; flex-direction: column; border-left: 2px solid var(--green-lo); overflow: hidden; }
.tools { display: grid; grid-template-columns: repeat(4, 38px); grid-auto-rows: 38px; gap: 2px; padding: 2px 0 2px 1px; border-bottom: 3px solid var(--green); }
.tools button { border: 3px solid; }
.tools svg { width: 32px; height: 32px; font: 9px var(--mono); }
.aqua-tools button { background: var(--aqua); border-color: var(--aqua-hi) var(--aqua-lo) var(--aqua-lo) var(--aqua-hi); }
.tools .alert { box-shadow: inset 0 0 0 3px #c81818; }
.gray-tools button { background: #ccc; border-color: #eee #888 #888 #eee; }
.gray-tools .lit { background: #fff; border-color: #fff #999 #999 #fff; }
.gray-tools .orange { background: #ffc64e; border-color: #ffe0a0 #987830 #987830 #ffe0a0; }
.overview { flex: 1; min-height: 0; overflow: hidden; background: #000; }
.overview svg { width: 155px; height: 434px; }
.position { height: 44px; background: var(--green); border: 2px solid; border-color: var(--green-lo) transparent var(--green-hi) transparent; padding: 7px 1px 0; line-height: 15px; }

.entry-row { display: flex; height: 35px; background: #000; padding: 2px 0 1px; gap: 2px; font-size: 12px; align-items: stretch; }
.entry-row > * { background: var(--cream); }
.cream { width: 30px; height: 32px; background: var(--cream); border: 2px solid; border-color: #ffffe8 #a0a080 #a0a080 #ffffe8; outline: 1px solid #8c8c6a; outline-offset: -4px; }
.cream svg { width: 20px; height: 20px; }
.entry-row .well { background: var(--green); width: 29px; padding: 2px; }
.well .cream { width: 25px; height: 28px; }
.entry-row label { width: 49px; padding: 8px 3px 0; margin-left: -2px; }
.cream-input { width: 172px; border: 3px solid; border-color: #8c8c6a #cfcfa4 #cfcfa4 #8c8c6a; }
.entry-row output { flex: 1; padding: 8px 1px 0; }
.entry-row .unit { width: 72px; background: var(--green); padding: 3px 0 3px 6px; display: flex; font-size: 15px; }
.status { height: 33px; background: #b4ffff; border: 3px solid; border-color: #d8ffff #5f9090 #5f9090 #d8ffff; outline: 1px solid #000; outline-offset: -1px; }

.option { position: relative; flex: 1; display: flex; background: var(--aqua); border: 2px solid; border-color: var(--aqua-hi) var(--aqua-lo) var(--aqua-lo) var(--aqua-hi); }
.option select { appearance: none; flex: 1; width: 0; background: none; border: 0; padding: 2px 0 0 5px; }
.option::after { content: ""; position: absolute; right: 6px; top: calc(50% - 3px); width: 12px; height: 7px; border: 2px solid; border-color: var(--aqua-hi) var(--aqua-lo) var(--aqua-lo) var(--aqua-hi); pointer-events: none; }
.option.green { background: var(--green); border-color: var(--green-hi) var(--green-lo) var(--green-lo) var(--green-hi); }
.option.lime { background: #18e718; border-color: #a0f8a0 #128012 #128012 #a0f8a0; }

.dialog { position: absolute; display: flex; flex-direction: column; box-shadow: 0 2px 10px 1px rgba(0, 0, 0, .55); border: 1px solid #223; border-top: 0; }
.dialog-title { height: 31px; display: flex; align-items: center; gap: 6px; padding: 0 8px 0 7px; background: #fff; border-bottom: 1px solid #000; font: 12px/16px var(--ui); }
.dialog-title button { margin-left: auto; }
.dialog-title button svg { width: 12px; height: 12px; }
.inactive { color: #999; }

.histogram { left: 294px; top: 360px; width: 467px; }
.hist-body { background: var(--green); padding: 3px 3px 3px 3px; border-bottom: 1px solid #000; }
.hist-top { display: flex; gap: 2px; height: 288px; }
.hist-side { width: 102px; background: var(--aqua); border: 1px solid #000; display: flex; flex-direction: column; }
fieldset { margin: 0; border: 0; border-bottom: 1px solid #000; outline: 1px solid #000; padding: 1px 0 0 4px; height: 137px; min-width: 0; }
fieldset label { display: flex; align-items: center; height: 27px; gap: 5px; padding-top: 2px; }
fieldset input { appearance: none; width: 10px; height: 10px; margin: 0 2px 0 3px; transform: rotate(45deg); background: var(--aqua); border: 2px solid; border-color: var(--aqua-hi) var(--aqua-lo) var(--aqua-lo) var(--aqua-hi); }
fieldset input:checked { background: #c8004e; border-color: var(--aqua-lo) var(--aqua-hi) var(--aqua-hi) var(--aqua-lo); }
.side-buttons { margin-top: auto; display: flex; gap: 4px; padding: 2px; }
.sq, .undo { width: 30px; height: 30px; padding: 0; }
.sq svg, .tall svg { width: 24px; height: 24px; }
symbol text, .sq text, .undo text { font: 11px var(--serif); }
.hist-main { flex: 1; min-width: 0; background: var(--aqua); border: 2px solid; border-color: var(--aqua-lo) var(--aqua-hi) var(--aqua-hi) #000; display: flex; flex-direction: column; }
.chart { height: 168px; border-bottom: 3px solid #000; border-top: 1px solid #000; display: flex; flex-direction: column; justify-content: space-between; }
.chart-title { align-self: center; margin-top: 2px; border: 1px solid #000; background: #b4ffff; padding: 2px 3px 0; height: 22px; line-height: 20px; font-style: italic; box-shadow: 2px 2px 0 #687878; }
.counts, .bins { display: grid; grid-template-columns: repeat(6, 55px); margin-left: 5px; text-align: center; color: #e01818; align-items: end; line-height: 15px; }
.counts .high { color: #000; border-bottom: 2px solid #611; }
.bins { margin-top: 2px; height: 29px; border: 1px solid #000; border-right: 0; width: 331px; background: #ff1818; color: #400; text-align: left; align-items: stretch; overflow: hidden; }
.bins span { border-right: 1px solid #000; padding: 2px 0 0 9px; }
.bins i { display: block; font-style: normal; padding-left: 9px; }
.hscroll { display: flex; height: 15px; background: #45ad92; border: 2px solid; border-color: var(--green-lo) var(--green-hi) var(--green-hi) var(--green-lo); }
.hscroll.aq, .vscroll.aq { background: #84b8b8; border-color: var(--aqua-lo) var(--aqua-hi) var(--aqua-hi) var(--aqua-lo); }
.hscroll.aq { margin-top: 7px; }
.hscroll span, .vscroll span { flex: 1; display: flex; }
.hscroll i, .vscroll i { background: var(--green); border: 2px solid; border-color: var(--green-hi) var(--green-lo) var(--green-lo) var(--green-hi); }
.vscroll i { flex: 1; }
.hscroll.aq i, .vscroll.aq i { background: var(--aqua); border-color: var(--aqua-hi) var(--aqua-lo) var(--aqua-lo) var(--aqua-hi); }
.vscroll { width: 15px; display: flex; flex-direction: column; background: #45ad92; border: 2px solid; border-color: var(--green-lo) var(--green-hi) var(--green-hi) var(--green-lo); }
.hscroll b, .vscroll b { width: 11px; height: 11px; background: var(--green-hi); clip-path: polygon(50% 0, 100% 100%, 0 100%); position: relative; }
.hscroll b::after, .vscroll b::after { content: ""; position: absolute; inset: 3px; background: var(--green); clip-path: polygon(50% 0, 100% 100%, 0 100%); }
.hscroll b.l { transform: rotate(-90deg); } .hscroll b.r { transform: rotate(90deg); } .vscroll b.d { transform: rotate(180deg); }
.hist-controls { flex: 1; display: flex; border: 1px solid #000; border-width: 1px 2px 2px 1px; }
.width-list { width: 58px; padding: 3px 4px; border: 2px solid; border-color: var(--aqua-lo) var(--aqua-hi) var(--aqua-hi) var(--aqua-lo); }
mark { background: #000; color: var(--aqua); display: block; height: 15px; line-height: 16px; width: 45px; }
.hist-controls .vscroll { margin-left: 0; }
.resolution { flex: 1; border-left: 1px solid #000; padding: 2px 2px 1px; display: flex; flex-direction: column; text-align: center; }
.resolution output { text-align: left; padding: 5px 0 0 15px; }
.resolution input { appearance: none; width: 100%; height: 15px; margin-top: auto; background: #84b8b8; border: 2px solid; border-color: var(--aqua-lo) var(--aqua-hi) var(--aqua-hi) var(--aqua-lo); }
.resolution input::-webkit-slider-thumb { appearance: none; width: 29px; height: 11px; background: linear-gradient(90deg, var(--aqua) 48%, var(--aqua-lo) 48% 54%, var(--aqua) 54%); border: 1px solid; border-color: var(--aqua-hi) var(--aqua-lo) var(--aqua-lo) var(--aqua-hi); }
.sash { height: 8px; padding-top: 3px; border-bottom: 0; display: flex; justify-content: flex-end; background: linear-gradient(var(--green) 3px, var(--green-lo) 3px 4px, var(--green-hi) 4px 5px, var(--green) 5px); }
.sash i { width: 10px; height: 9px; margin: -3px 7px 0 0; background: var(--green); border: 2px solid; border-color: var(--green-hi) var(--green-lo) var(--green-lo) var(--green-hi); }
.map { height: 165px; display: flex; justify-content: center; align-items: center; border: 2px solid; border-color: var(--green-lo) var(--green-hi) var(--green-hi) var(--green-lo); outline: 1px solid #000; outline-offset: -3px; }
.map svg { width: 148px; height: 122px; }
.hist-foot { display: flex; align-items: center; gap: 3px; height: 43px; padding: 0 3px 0 2px; }
.tall { width: 30px; height: 38px; padding: 0; }
.summary { flex: 1; height: 42px; border: 1px solid #000; background: var(--aqua); line-height: 41px; padding-left: 2px; }
.chart-btn { width: 38px; height: 38px; padding: 0; }
.chart-btn svg { width: 30px; height: 30px; }
.close-bar { height: 28px; width: 100%; }

.viewer { left: 1143px; top: 108px; width: 495px; }
.checks { background: var(--aqua); padding: 2px; height: 27px; font: bold 15px/18px var(--serif); }
.checks button { width: 100%; height: 23px; }
.columns { display: flex; gap: 2px; border-top: 2px solid #000; border-bottom: 2px solid #000; background: #000; height: 622px; }
.layers-col { width: 170px; background: var(--green); display: flex; flex-direction: column; }
.layers-head { display: flex; gap: 2px; height: 30px; background: #000; }
.layers-head > * { flex: none; border-color: var(--aqua-hi) var(--aqua-lo) var(--aqua-lo) var(--aqua-hi); }
.layers-head h3 { flex: 1; background: var(--aqua); font-style: italic; text-align: center; line-height: 30px; margin-bottom: 1px; }
.it { font-style: italic; font-weight: normal; outline: 1px solid var(--green); outline-offset: -1px; margin-bottom: 1px; }
.layers-head .it { width: 50px; }
.layers-head .it:last-child { width: 40px; }
.list-area { flex: 1; min-height: 0; display: flex; justify-content: space-between; padding-right: 2px; }
.list { flex: 1; margin-right: 4px; padding: 3px 3px 0 2px; border: 2px solid; border-color: var(--green-lo) var(--green-hi) var(--green-hi) var(--green-lo); }
.list li { height: 15px; line-height: 17px; margin-bottom: 3px; white-space: nowrap; }
.list .sel { background: #000; color: var(--green); }
.dark .sel { color: #9cdbdb; }
.hscroll.short { margin: 5px 20px 2px 0; }
.replace { height: 32px; border-top: 1px solid #000; padding: 2px 2px 2px 5px; display: flex; }
.cat-col { flex: 1; min-width: 0; background: var(--green); display: flex; flex-direction: column; }
.cat-head { display: flex; height: 31px; background: var(--aqua); align-items: stretch; padding-right: 2px; }
.it-b { width: 208px; font-style: italic; outline: 1px solid var(--green); outline-offset: -1px; }
.cat-head label { width: 51px; padding: 8px 0 0; }
.cat-head .option { margin: 1px 0; }
.lower span { padding-top: 18px; }
.nav-row { display: flex; gap: 4px; height: 25px; padding: 0 2px 2px; }
.nav-row button { width: 44px; height: 23px; }
.nav-row button:first-child { width: 53px; }
.nav-row label { padding-top: 3px; width: 55px; white-space: nowrap; }
.nav-row input { flex: 1; width: 0; background: var(--green); border: 2px solid; border-color: var(--green-lo) var(--green-hi) var(--green-hi) var(--green-lo); padding-left: 5px; }
.zoom-row { display: flex; height: 33px; gap: 1px; }
.boxed { display: flex; width: 123px; border: 1px solid #000; padding: 1px 1px 1px 4px; }
.boxed.sv { width: 97px; padding: 0; background: #18e718; }
.sv label { background: var(--aqua); width: 27px; padding-top: 8px; margin-right: 5px; }
.sv .option { margin: 1px; }
.show { display: flex; gap: 3px; padding: 5px 0 0 3px; white-space: nowrap; }
.show input { appearance: none; width: 13px; height: 13px; margin-top: 2px; border: 1px solid; border-color: var(--green-hi) var(--green-lo) var(--green-lo) var(--green-hi); }
.action-row { height: 33px; display: flex; justify-content: flex-end; gap: 4px; padding: 1px 2px; }
.undo { width: 34px; }
.undo svg { width: 26px; height: 24px; }
.undo text { font-size: 10px; }
.measure { height: 21px; background: var(--green); text-align: center; line-height: 21px; border-bottom: 2px solid #000; }
.erf { height: 20px; background: var(--cream); line-height: 21px; padding-left: 1px; border-bottom: 1px solid #000; }
.view-foot { display: flex; gap: 4px; height: 34px; background: var(--aqua); padding: 2px; }
.view-foot .bevel:first-child { flex: 1; }
.red { box-shadow: inset 0 0 0 2px #d01818; }

.taskbar { height: 40px; display: flex; background: linear-gradient(90deg, #3a4144 72%, #1e2c31 86%); color: #fff; font: 12px/16px var(--ui); }
.start { width: 58px; padding-right: 11px; } .start svg { width: 17px; height: 17px; }
.folder { width: 44px; padding-right: 13px; } .folder svg { width: 23px; height: 23px; }
.tasks { flex: 1; display: flex; gap: 8px; }
.tasks button { width: 130px; justify-content: flex-start; padding-left: 5px; gap: 6px; white-space: nowrap; overflow: hidden; border-bottom: 2px solid #76b9ed; }
.tasks svg { width: 23px; height: 23px; }
.tasks .active { background: #5f6a6e; }
.tray { display: flex; align-items: center; gap: 8px; font-size: 16px; }
.tray svg { width: 16px; height: 16px; }
.ime { background: #fff; color: #111; width: 15px; height: 15px; line-height: 15px; font-size: 14px; margin-left: 6px; }
time { width: 88px; text-align: center; line-height: 20px; }
.notice { width: 48px; padding-right: 8px; } .notice svg { width: 24px; height: 26px; }
.notice text { font-size: 13px; font-weight: bold; fill: #fff; }
```
